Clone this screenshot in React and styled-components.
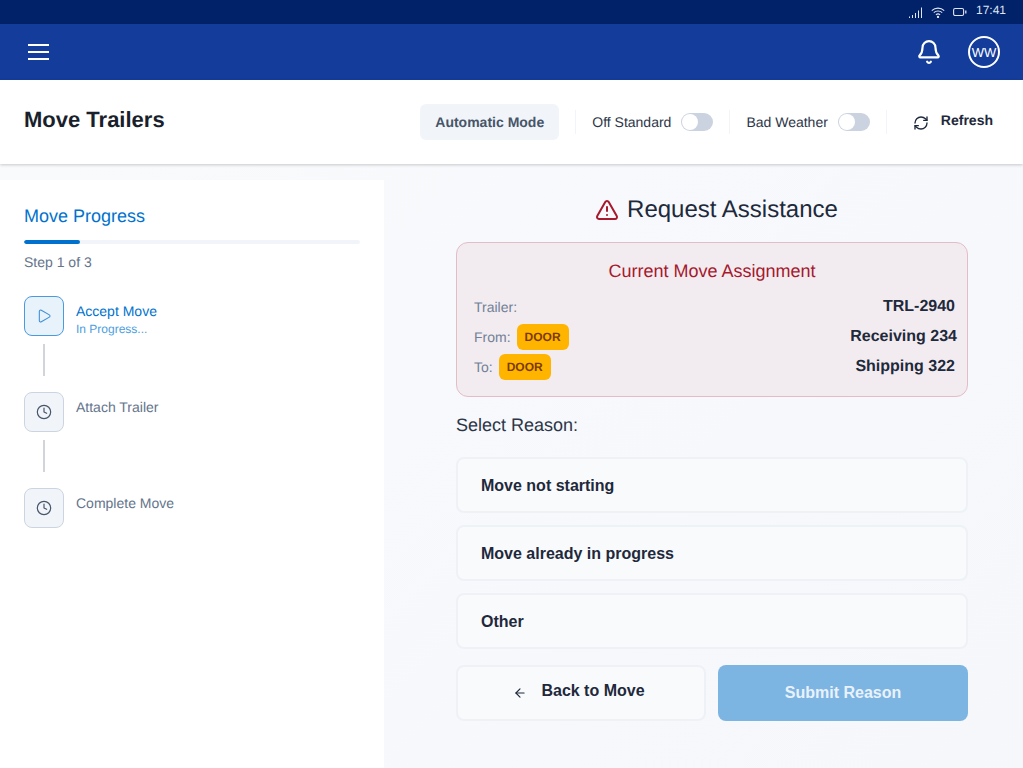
import React from "react";
import styled, { createGlobalStyle } from "styled-components";
import { Bell, Play, Clock, TriangleAlert, ArrowLeft, RefreshCw } from "lucide-react";

const Global = createGlobalStyle`
  html, body { margin: 0; padding: 0; height: 100%; }
  body { font-family: "Liberation Sans", Arial, sans-serif; background: #f6f8fb; overflow: hidden; text-rendering: geometricPrecision; }
  * { box-sizing: border-box; }
`;

const Page = styled.div`
  width: 1023px; height: 768px; display: flex; flex-direction: column; overflow: hidden;
  background: #f6f8fb;
`;
const StatusBar = styled.div`
  height: 24px; background: #012169; color: #dfe5f2; display: flex; align-items: center;
  justify-content: flex-end; padding: 0 17px 4px 0; font-size: 12px;
`;
const StatusIcons = styled.div`
  display: flex; align-items: center; gap: 8px; margin-right: 9px; margin-top: 4px;
`;
const NavBar = styled.div`
  height: 56px; background: #133c9b; display: flex; align-items: center; justify-content: space-between;
  padding: 0 23px 0 28px; color: #fff;
`;
const NavRight = styled.div`
  display: flex; align-items: center; gap: 26px;
`;
const Avatar = styled.div`
  width: 32px; height: 32px; border-radius: 50%; border: 2px solid #fff; display: flex; align-items: center;
  justify-content: center; font-size: 13px;
`;
const Header = styled.div`
  height: 84px; background: #fff; display: flex; align-items: center; justify-content: space-between;
  padding: 0 30px 0 24px; box-shadow: 0 1px 3px rgba(0,0,0,.2); position: relative;
`;
const Title = styled.h1`
  margin: 0 0 4px; font-size: 22px; line-height: 28px; font-weight: 700; color: #1a1f2c;
`;
const Controls = styled.div`
  display: flex; align-items: center; margin-top: -1px;
`;
const ModeChip = styled.div`
  width: 139px; height: 36px; border-radius: 6px; background: #f1f4f9; color: #475569; font-size: 14px;
  font-weight: 700; display: flex; align-items: center; justify-content: center;
`;
const Divider = styled.div`
  width: 1px; height: 24px; background: #f1f4f9; margin: 0 16px;
`;
const ToggleGroup = styled.label`
  display: flex; align-items: center; gap: 10px; font-size: 14px; color: #2c3648;
`;
const Toggle = styled.span`
  width: 32px; height: 18px; border-radius: 9px; background: #cbd2e0; display: block; position: relative;
  &::after {
    content: ""; position: absolute; left: 1px; top: 1px; width: 16px; height: 16px; border-radius: 50%; background: #fff;
  }
`;
const Refresh = styled.div`
  display: flex; align-items: center; gap: 12px; margin-left: 10px; color: #1e293b; font-size: 14px; font-weight: 700;
`;
const RefreshText = styled.span`
  margin-top: -3px;
`;
const RefreshIcon = styled(RefreshCw)`
  margin-top: 2px;
`;
const Body = styled.div`
  flex: 1; display: flex; padding-top: 16px; min-height: 0;
  background: linear-gradient(135deg, #f8fafc, #f5f7fb);
`;
const Side = styled.aside`
  width: 384px; background: #fff; padding: 24px; flex: none;
`;
const SideTitle = styled.h2`
  margin: 0; font-size: 18px; line-height: 24px; font-weight: 400; color: #0072ce;
`;
const Track = styled.div`
  height: 4px; background: #f1f5f9; border-radius: 2px; margin-top: 12px; width: 336px; overflow: hidden;
`;
const Fill = styled.div`
  height: 100%; background: #0072ce; border-radius: 2px;
`;
const StepCount = styled.div`
  font-size: 14px; line-height: 20px; color: #64748b; margin-top: 8px;
`;
const Steps = styled.div`
  margin-top: 24px; display: flex; flex-direction: column;
`;
const Step = styled.div`
  display: flex; gap: 12px; height: 40px;
`;
const StepIcon = styled.div`
  width: 40px; height: 40px; border-radius: 8px; display: flex; align-items: center; justify-content: center; flex: none;
  border: 1px solid ${p => (p.$active ? "#4a9ae0" : "#cbd5e1")};
  background: ${p => (p.$active ? "#e8f2fb" : "#f1f5f9")};
  color: ${p => (p.$active ? "#3b8fd8" : "#475569")};
`;
const StepText = styled.div`
  display: flex; flex-direction: column; padding-top: 7px;
`;
const StepName = styled.div`
  font-size: 14px; line-height: 16px; color: ${p => (p.$active ? "#0072ce" : "#64748b")};
`;
const StepSub = styled.div`
  font-size: 12px; line-height: 14px; color: #4c9edd; margin-top: 3px;
`;
const Connector = styled.div`
  width: 2px; height: 32px; background: #d1d5db; margin: 8px 0 16px 19px;
`;
const Main = styled.main`
  flex: 1; display: flex; flex-direction: column; align-items: center; padding-left: 17px;
`;
const Column = styled.div`
  width: 512px; display: flex; flex-direction: column;
`;
const Heading = styled.div`
  display: flex; align-items: center; justify-content: center; gap: 8px; height: 28px; margin-top: 16px;
  padding-left: 9px; font-size: 24px; line-height: 28px; color: #1e293b;
`;
const Card = styled.section`
  margin-top: 18px; height: 155px; border: 1px solid #e4bcc6; border-radius: 12px; background: #f2ecf0;
  padding: 16px 10px 0 17px;
`;
const CardTitle = styled.div`
  text-align: center; font-size: 18px; line-height: 24px; color: #a6192e; margin-left: -7px;
`;
const Row = styled.div`
  display: flex; align-items: center; justify-content: space-between; height: 30px;
  padding-right: ${p => p.$pr || 0}px;
`;
const RowList = styled.div`
  margin-top: 9px;
`;
const RowLabel = styled.div`
  display: flex; align-items: center; gap: 6px; font-size: 14px; color: #718096;
`;
const Badge = styled.span`
  background: #ffb500; color: #7c3a02; font-size: 12px; font-weight: 700; height: 26px; width: 52px; border-radius: 6px;
  display: flex; align-items: center; justify-content: center;
`;
const RowValue = styled.div`
  font-size: 16px; font-weight: 700; color: #1e293b;
`;
const SelectLabel = styled.div`
  margin-top: 17px; font-size: 18px; line-height: 22px; color: #2c3648;
`;
const Options = styled.div`
  margin-top: 21px; display: flex; flex-direction: column; gap: 12px;
`;
const Option = styled.button`
  height: 56px; border: 2px solid #eef1f6; border-radius: 8px; background: #f9fafc; text-align: left;
  padding: 2px 23px 0; font: 700 16px "Liberation Sans", Arial, sans-serif; color: #1e293b;
`;
const Actions = styled.div`
  margin-top: 16px; display: grid; grid-template-columns: 250px 250px; gap: 12px;
`;
const BackButton = styled.button`
  height: 56px; border: 2px solid #eef1f6; border-radius: 8px; background: #f9fafc; display: flex;
  align-items: center; justify-content: center; gap: 14px; color: #1e293b; padding: 0 4px 0 0;
  font: 700 16px "Liberation Sans", Arial, sans-serif;
`;
const BackText = styled.span`
  margin-top: -4px;
`;
const SubmitButton = styled.button`
  height: 56px; border: 0; border-radius: 8px; background: #7cb4e2; color: #e9f2fb;
  font: 700 16px "Liberation Sans", Arial, sans-serif;
`;

const Hamburger = () => (
  <svg width="21" height="16" viewBox="0 0 21 16" stroke="#fff" strokeWidth="2">
    <path d="M0 1h21M0 8h21M0 15h21" />
  </svg>
);
const Signal = () => (
  <svg width="14" height="11" viewBox="0 0 14 11" fill="#dfe5f2">
    <rect x="0" y="9.5" width="1" height="1.5" />
    <rect x="3" y="8" width="1" height="3" />
    <rect x="6" y="6" width="1" height="5" />
    <rect x="9" y="3.5" width="1" height="7.5" />
    <rect x="12" y="0.5" width="1" height="10.5" />
  </svg>
);
const Wifi = () => (
  <svg width="14" height="11" viewBox="0 0 14 11" fill="none" stroke="#dfe5f2" strokeWidth="1.1">
    <path d="M.8 3.6a9 9 0 0 1 12.4 0" />
    <path d="M2.8 5.7a6.2 6.2 0 0 1 8.4 0" />
    <path d="M4.9 7.8a3.2 3.2 0 0 1 4.2 0" />
    <circle cx="7" cy="10" r=".6" fill="#dfe5f2" />
  </svg>
);
const Battery = () => (
  <svg width="14" height="10" viewBox="0 0 14 10" fill="none" stroke="#dfe5f2">
    <rect x=".6" y="1.5" width="10" height="7" rx="1.5" strokeWidth="1.1" />
    <path d="M12.8 3.5v3" strokeWidth="1.3" />
  </svg>
);

const steps = [
  { name: "Accept Move", sub: "In Progress...", active: true },
  { name: "Attach Trailer" },
  { name: "Complete Move" },
];

export default function App() {
  return (
    <Page>
      <Global />
      <StatusBar>
        <StatusIcons><Signal /><Wifi /><Battery /></StatusIcons>
        <span>17:41</span>
      </StatusBar>
      <NavBar>
        <Hamburger />
        <NavRight>
          <Bell size={26} strokeWidth={2} />
          <Avatar>WW</Avatar>
        </NavRight>
      </NavBar>
      <Header>
        <Title>Move Trailers</Title>
        <Controls>
          <ModeChip>Automatic Mode</ModeChip>
          <Divider />
          <ToggleGroup>Off Standard<Toggle /></ToggleGroup>
          <Divider />
          <ToggleGroup>Bad Weather<Toggle /></ToggleGroup>
          <Divider />
          <Refresh>
            <RefreshIcon size={16} strokeWidth={2} />
            <RefreshText>Refresh</RefreshText>
          </Refresh>
        </Controls>
      </Header>
      <Body>
        <Side>
          <SideTitle>Move Progress</SideTitle>
          <Track><Fill style={{ width: "16.67%" }} /></Track>
          <StepCount>Step 1 of 3</StepCount>
          <Steps>
            {steps.map((s, i) => (
              <React.Fragment key={s.name}>
                <Step>
                  <StepIcon $active={s.active}>
                    {s.active ? <Play size={16} strokeWidth={1.6} /> : <Clock size={16} strokeWidth={1.8} />}
                  </StepIcon>
                  <StepText>
                    <StepName $active={s.active}>{s.name}</StepName>
                    {s.sub && <StepSub>{s.sub}</StepSub>}
                  </StepText>
                </Step>
                {i < steps.length - 1 && <Connector />}
              </React.Fragment>
            ))}
          </Steps>
        </Side>
        <Main>
          <Column>
            <Heading>
              <TriangleAlert size={24} strokeWidth={2} color="#a6192e" />
              Request Assistance
            </Heading>
            <Card>
              <CardTitle>Current Move Assignment</CardTitle>
              <RowList>
                <Row $pr={2}>
                  <RowLabel>Trailer:</RowLabel>
                  <RowValue>TRL-2940</RowValue>
                </Row>
                <Row>
                  <RowLabel>From: <Badge>DOOR</Badge></RowLabel>
                  <RowValue>Receiving 234</RowValue>
                </Row>
                <Row $pr={2}>
                  <RowLabel>To: <Badge>DOOR</Badge></RowLabel>
                  <RowValue>Shipping 322</RowValue>
                </Row>
              </RowList>
            </Card>
            <SelectLabel>Select Reason:</SelectLabel>
            <Options>
              <Option>Move not starting</Option>
              <Option>Move already in progress</Option>
              <Option>Other</Option>
            </Options>
            <Actions>
              <BackButton>
                <ArrowLeft size={14} strokeWidth={2} />
                <BackText>Back to Move</BackText>
              </BackButton>
              <SubmitButton>Submit Reason</SubmitButton>
            </Actions>
          </Column>
        </Main>
      </Body>
    </Page>
  );
}
